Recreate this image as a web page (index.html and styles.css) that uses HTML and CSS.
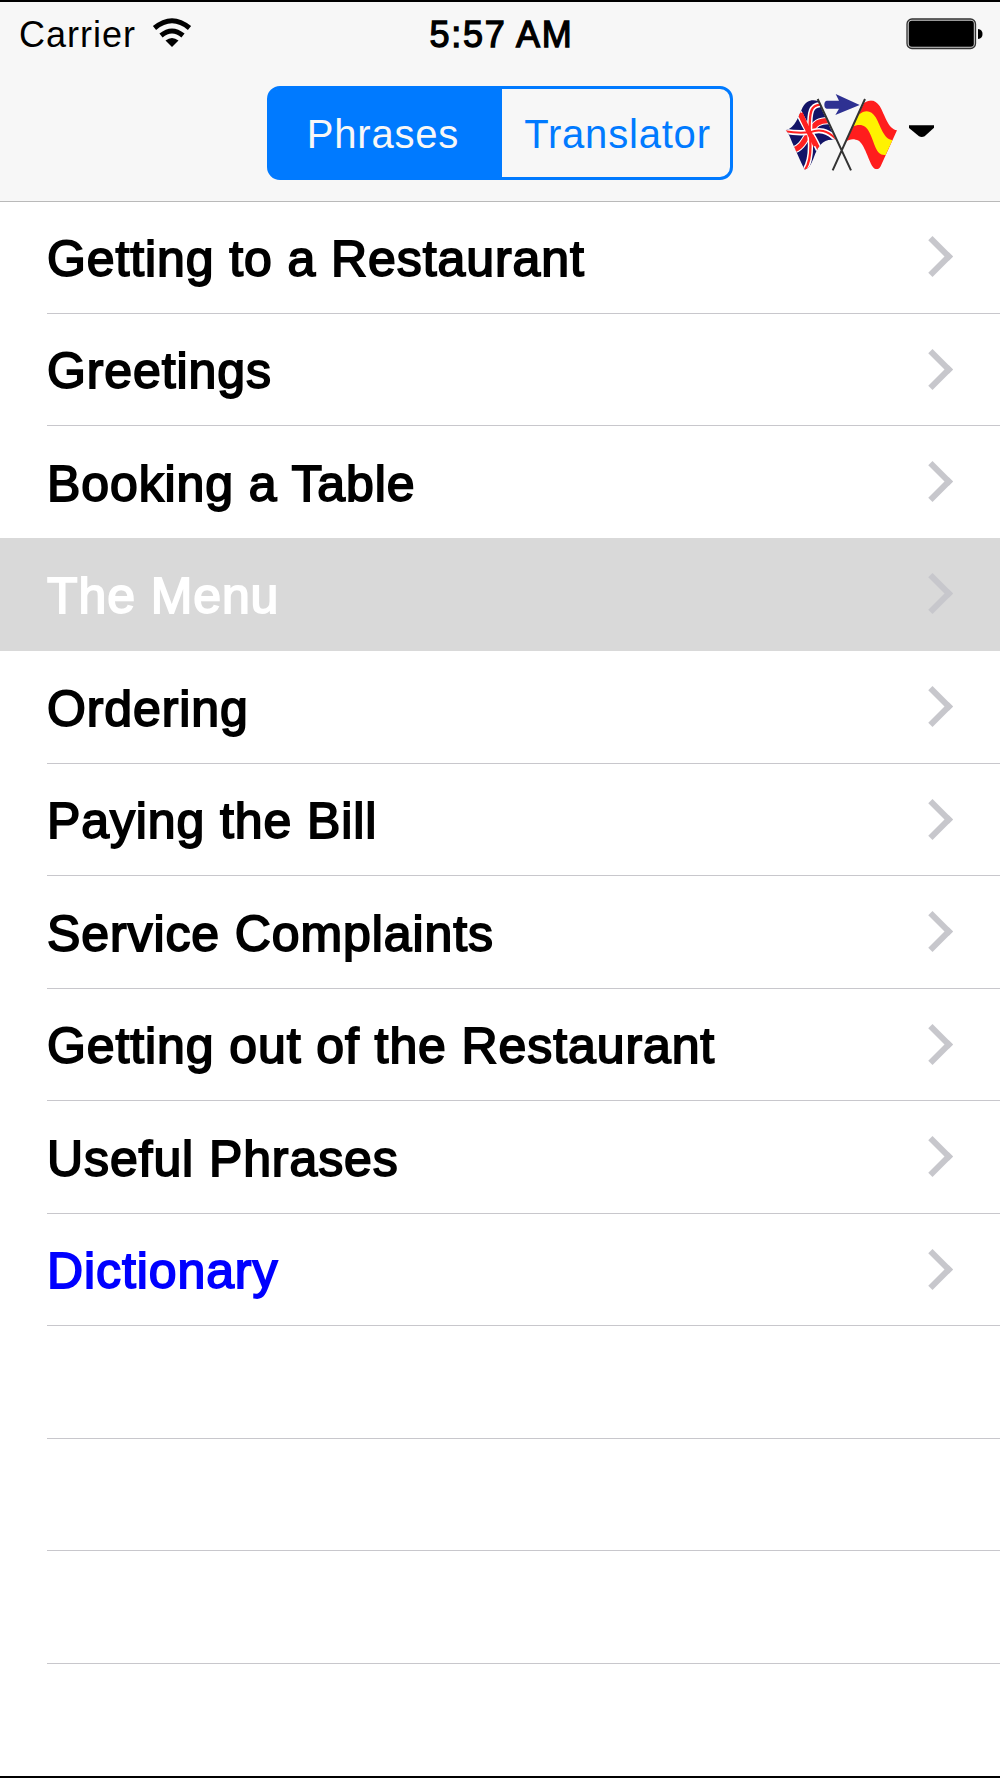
FILE: index.html
```html
<!DOCTYPE html>
<html lang="en">
<head>
    <meta charset="utf-8">
    <title>Phrases</title>
    <link rel="stylesheet" href="styles.css">
</head>
<body>

<div class="header">
    <div class="status-bar">
        <div class="carrier">
            <span>Carrier</span>
            <svg class="wifi" viewBox="0 0 40 30" width="40" height="30">
                <path d="M2.5 10 Q20 -4.5 37.500 10" fill="none" stroke="#000" stroke-width="5"/>
                <path d="M9 17.500 Q20 8.500 31 17.500" fill="none" stroke="#000" stroke-width="5"/>
                <path d="M13.500 22.500 Q20 17.500 26.500 22.500 L20 29 Z"/>
            </svg>
        </div>
        <div class="time">5:57 AM</div>
        <svg class="battery" viewBox="0 0 78 32" width="78" height="32">
            <rect x="1" y="1" width="68.500" height="29.500" rx="5" fill="#ccc" stroke="#333" stroke-width="1.300"/>
            <rect x="2.800" y="2.800" width="65" height="26" rx="3"/>
            <path d="M72 11 Q76.500 11.500 76.500 16 Q76.500 20.500 72 21 Z"/>
        </svg>
    </div>

    <div class="nav-bar">
        <div class="segmented">
            <div class="segment active">Phrases</div>
            <div class="segment">Translator</div>
        </div>
        <svg class="languages" viewBox="0 0 540 330" width="180" height="110">
            <defs>
                <clipPath id="uk">
                    <path d="M144 63 C125 57 108 62 98 82 C84 112 76 143 47 151 C58 160 63 183 74 203 C82 222 94 249 104 269 C119 266 125 248 132 231 C145 196 160 174 197 180 Z"/>
                </clipPath>
                <clipPath id="spain">
                    <path d="M282 69 C300 56 317 60 329 78 C345 105 354 147 381 151 L332 259 C326 271 314 271 306 257 C290 225 279 180 257 179 C245 176 235 180 229 184 Z"/>
                </clipPath>
            </defs>

            <!-- british flag -->
            <g clip-path="url(#uk)" fill="none">
                <rect x="40" y="50" width="170" height="230" fill="#131467"/>
                <path d="M82 91 C98 118 105 140 119 157 C132 175 138 190 150 215" stroke="#fff" stroke-width="20"/>
                <path d="M68 211 C95 205 105 177 119 157 C135 130 147 120 181 122" stroke="#fff" stroke-width="22"/>
                <path d="M82 91 C98 118 105 140 119 157 C132 175 138 190 150 215" stroke="#ff2020" stroke-width="11"/>
                <path d="M68 211 C95 205 105 177 119 157 C135 130 147 120 181 122" stroke="#ff2020" stroke-width="16"/>
                <path d="M46 154 C73 159 97 159 119 157 C148 147 171 150 199 178" stroke="#fff" stroke-width="16"/>
                <path d="M150 74 C124 77 118 90 119 157 C124 202 123 243 105 270" stroke="#fff" stroke-width="16"/>
                <path d="M46 154 C73 159 97 159 119 157 C148 147 171 150 199 178" stroke="#ff2020" stroke-width="6"/>
                <path d="M150 74 C124 77 118 90 119 157 C124 202 123 243 105 270" stroke="#ff2020" stroke-width="7"/>
                <path d="M91 100 C108 140 117 158 137 197" stroke="#ff2020" stroke-width="15"/>
            </g>

            <!-- spanish flag -->
            <g clip-path="url(#spain)">
                <rect x="225" y="50" width="160" height="230" fill="#ff1d1d"/>
                <path d="M266 104 C287 87 304 91 317 112 C333 140 340 177 368 181 L347 225 C318 229 315 191 298 157 C287 133 270 131 246 140 Z" fill="#fff200"/>
            </g>

            <path d="M143 57 L243 271 M285 57 L188 271" stroke="#333" stroke-width="6" fill="none"/>
            <path d="M170 62 H207 L197 42 L269 75 L196 105 L207 86 H170 Q163 84 163 74 Q163 64 170 62 Z" fill="#2e3192"/>
            <path d="M417 136 H492 V143 L464 169 Q455 173 447 169 L417 144 Z"/>
        </svg>
    </div>
</div>

<ul class="list">
    <li><span>Getting to a Restaurant</span><i class="chevron"></i></li>
    <li><span>Greetings</span><i class="chevron"></i></li>
    <li><span>Booking a Table</span><i class="chevron"></i></li>
    <li class="selected"><span>The Menu</span><i class="chevron"></i></li>
    <li><span>Ordering</span><i class="chevron"></i></li>
    <li><span>Paying the Bill</span><i class="chevron"></i></li>
    <li><span>Service Complaints</span><i class="chevron"></i></li>
    <li><span>Getting out of the Restaurant</span><i class="chevron"></i></li>
    <li><span>Useful Phrases</span><i class="chevron"></i></li>
    <li class="dictionary"><span>Dictionary</span><i class="chevron"></i></li>
    <li></li>
    <li></li>
    <li></li>
</ul>

</body>
</html>
```
FILE: styles.css
```css
* {
    box-sizing: border-box;
}

body {
    font-family: "Liberation Sans", Arial, sans-serif;
    background-color: #fff;
    color: #000;
    margin: 0;
    height: 1778px;
    border-top: 2px solid #000;
    border-bottom: 2px solid #000;
    overflow: hidden;
}

.header {
    height: 200px;
    background-color: #f7f7f7;
    border-bottom: 1px solid #b9b9b9;
}

.status-bar {
    display: grid;
    grid-template-columns: 1fr auto 1fr;
    align-items: center;
    height: 64px;
    padding: 0 16px 0 19px;
    font-size: 36px;
}

.carrier {
    display: flex;
    align-items: center;
    gap: 16px;
    letter-spacing: 1px;
}

.carrier span,
.time {
    padding-top: 2px;
}

.wifi {
    margin-bottom: 3px;
}

.time {
    letter-spacing: 1.7px;
    -webkit-text-stroke: 1.3px #000;
}

.battery {
    justify-self: end;
    margin-bottom: 1px;
}

.nav-bar {
    display: grid;
    grid-template-columns: 1fr 466px 1fr;
    align-items: start;
    padding-top: 14px;
}

.segmented {
    grid-column: 2;
    display: flex;
    height: 94px;
    margin-top: 6px;
    border: 3px solid #007aff;
    border-radius: 13px;
    background-color: #f7f7f7;
}

.segment {
    flex: 1;
    display: flex;
    align-items: center;
    justify-content: center;
    padding: 2px 0 0 3px;
    color: #007aff;
    font-size: 40px;
    letter-spacing: 0.8px;
}

.segment.active {
    flex: 0 0 232px;
    padding: 2px 6px 0 0;
    background-color: #007aff;
    border-radius: 9px 0 0 9px;
    /* fill the seam left by the rounded border */
    box-shadow: -1px 0 0 #007aff;
    color: #f7f7f7;
}

.languages {
    margin-left: 37px;
}

.list {
    list-style: none;
    margin: -1px 0 0;
    padding: 0;
}

.list li {
    display: flex;
    align-items: center;
    justify-content: space-between;
    height: 112.5px;
    margin-left: 47px;
    padding-right: 53.5px;
    border-bottom: 1px solid #c8c7cc;
    font-size: 50px;
    letter-spacing: 0.9px;
    -webkit-text-stroke: 1.8px currentColor;
}

.list li span {
    padding-top: 4px;
}

.list li.selected {
    margin-left: 0;
    margin-top: -1px;
    height: 113.5px;
    padding-left: 47px;
    background-color: #d9d9d9;
    border-bottom-color: #d9d9d9;
    color: #fff;
}

.list li.dictionary {
    color: #0000ff;
}

.chevron {
    width: 29px;
    height: 29px;
    border-top: 6px solid #c7c7cc;
    border-right: 6px solid #c7c7cc;
    transform: rotate(45deg);
}
```
